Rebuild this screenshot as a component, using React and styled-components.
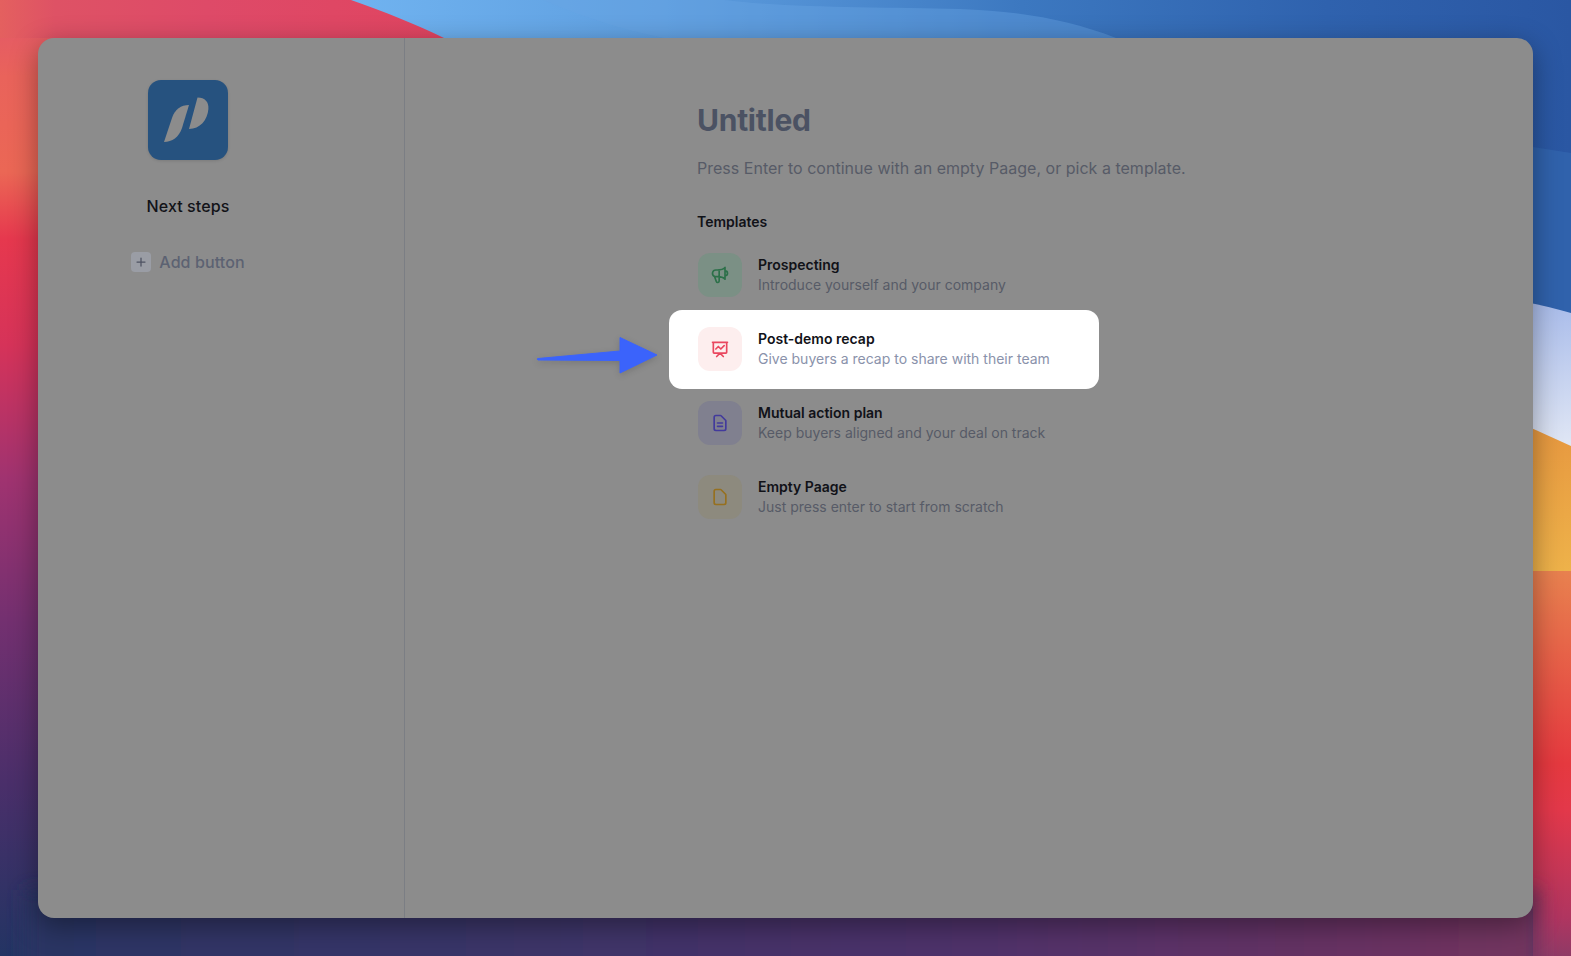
import styled, { createGlobalStyle } from 'styled-components';
import {
  HiOutlineSpeakerphone,
  HiOutlinePresentationChartLine,
  HiOutlineDocumentText,
  HiOutlineDocument,
  HiOutlinePlus,
} from 'react-icons/hi';

const templates = [
  { title: 'Prospecting', text: 'Introduce yourself and your company', Icon: HiOutlineSpeakerphone, tile: '#7b9085', ink: '#2c7049' },
  { title: 'Post-demo recap', text: 'Give buyers a recap to share with their team', Icon: HiOutlinePresentationChartLine, tile: '#fdeeee', ink: '#e9475f', active: true },
  { title: 'Mutual action plan', text: 'Keep buyers aligned and your deal on track', Icon: HiOutlineDocumentText, tile: '#80808f', ink: '#423a9c' },
  { title: 'Empty Paage', text: 'Just press enter to start from scratch', Icon: HiOutlineDocument, tile: '#8d8a7e', ink: '#96701f' },
];

function Wallpaper() {
  return (
    <WallpaperSvg viewBox="0 0 1571 956" preserveAspectRatio="none">
      <defs>
        <linearGradient id="left" x1="0" y1="0" x2="0" y2="1">
          <stop offset="0" stopColor="#e2566a" />
          <stop offset="0.08" stopColor="#e9635b" />
          <stop offset="0.18" stopColor="#eb6755" />
          <stop offset="0.25" stopColor="#e6384e" />
          <stop offset="0.36" stopColor="#d63359" />
          <stop offset="0.5" stopColor="#a03370" />
          <stop offset="0.65" stopColor="#733070" />
          <stop offset="0.82" stopColor="#4a2f6a" />
          <stop offset="1" stopColor="#233463" />
        </linearGradient>
        <linearGradient id="crest" x1="0" y1="0" x2="1" y2="0">
          <stop offset="0" stopColor="#e4605f" />
          <stop offset="0.12" stopColor="#de5265" />
          <stop offset="0.45" stopColor="#de4a68" />
          <stop offset="1" stopColor="#e04460" />
        </linearGradient>
        <linearGradient id="bottom" x1="0" y1="0" x2="1" y2="0">
          <stop offset="0" stopColor="#2a3464" />
          <stop offset="0.3" stopColor="#3a3568" />
          <stop offset="0.65" stopColor="#51306a" />
          <stop offset="1" stopColor="#74345f" />
        </linearGradient>
        <linearGradient id="sky" x1="0" y1="0" x2="1" y2="0">
          <stop offset="0" stopColor="#70b3f0" />
          <stop offset="0.25" stopColor="#5f9fe0" />
          <stop offset="0.55" stopColor="#3c78c0" />
          <stop offset="0.8" stopColor="#2f62ae" />
          <stop offset="1" stopColor="#2a57a3" />
        </linearGradient>
        <linearGradient id="pale" x1="0" y1="0" x2="0" y2="1">
          <stop offset="0" stopColor="#a8bbea" />
          <stop offset="1" stopColor="#e2e8f5" />
        </linearGradient>
        <linearGradient id="amber" x1="0" y1="0" x2="0" y2="1">
          <stop offset="0" stopColor="#e6963f" />
          <stop offset="1" stopColor="#eeb24a" />
        </linearGradient>
        <linearGradient id="ember" x1="0" y1="0" x2="0" y2="1">
          <stop offset="0" stopColor="#e8814f" />
          <stop offset="0.5" stopColor="#e5393f" />
          <stop offset="0.62" stopColor="#e3384a" />
          <stop offset="0.9" stopColor="#b03560" />
          <stop offset="1" stopColor="#8f3a66" />
        </linearGradient>
        <filter id="soft" x="-5%" y="-50%" width="110%" height="200%">
          <feGaussianBlur stdDeviation="9" />
        </filter>
      </defs>
      <rect width="1571" height="956" fill="url(#left)" />
      <rect width="460" height="38" fill="url(#crest)" />
      <path d="M351 0 C385 12 415 24 444 38 L444 320 L1571 320 L1571 0 Z" fill="url(#sky)" />
      <path d="M543 0 C585 18 625 30 664 38 L1116 38 C1070 20 1020 11 960 9 C880 7 790 8 724 0 Z" fill="#6aa5e4" opacity="0.4" />
      <path d="M1533 147 L1571 153 L1571 320 L1533 320 Z" fill="#3062ac" />
      <path d="M1500 298 C1525 301 1550 307 1571 313 L1571 450 L1500 450 Z" fill="url(#pale)" />
      <path d="M1500 415 C1525 425 1550 436 1571 446 L1571 571 L1500 571 Z" fill="url(#amber)" />
      <rect x="1533" y="571" width="38" height="385" fill="url(#ember)" />
      <rect x="25" y="890" width="1515" height="100" fill="url(#bottom)" filter="url(#soft)" />
    </WallpaperSvg>
  );
}

function App() {
  return (
    <Stage>
      <GlobalStyle />
      <Wallpaper />
      <Window>
        <Sidebar>
          <LogoTile>
            <svg width="80" height="80" viewBox="0 0 80 80">
              <path d="M16 62 L24 38 C27 29 33 25 41 25 L34 48 C31 57 24 62 16 62Z" fill="#8c8c8c" />
              <path d="M49.5 17.5 C57 17.5 61 22 60.4 29 C59.5 40 52 49 41 49 Z" fill="#8c8c8c" />
            </svg>
          </LogoTile>
          <SideTitle>Next steps</SideTitle>
          <AddButton>
            <PlusBox><HiOutlinePlus size={12} /></PlusBox>
            Add button
          </AddButton>
        </Sidebar>
        <Main>
          <Title>Untitled</Title>
          <Subtitle>Press Enter to continue with an empty Paage, or pick a template.</Subtitle>
          <SectionLabel>Templates</SectionLabel>
          <List>
            {templates.map(({ title, text, Icon, tile, ink, active }) => (
              <Row key={title} $active={active}>
                {active && (
                  <Arrow width="124" height="40" viewBox="0 0 124 40">
                    <path d="M2 22.5 L84 15 L84 1.5 L121 19 L84 37 L84 24.5 L2 24 Q0 23 2 22.5Z" fill="#3b63fb" stroke="#3b63fb" strokeLinejoin="round" strokeWidth="1" />
                  </Arrow>
                )}
                <Tile $bg={tile} $ink={ink}><Icon size={20} /></Tile>
                <div>
                  <RowTitle>{title}</RowTitle>
                  <RowText $active={active}>{text}</RowText>
                </div>
              </Row>
            ))}
          </List>
        </Main>
      </Window>
    </Stage>
  );
}

const GlobalStyle = createGlobalStyle`
  html, body {
    margin: 0;
    padding: 0;
    overflow: hidden;
  }
  body {
    font-family: Inter, "Liberation Sans", sans-serif;
  }
`;

const Stage = styled.div`
  position: relative;
  box-sizing: border-box;
  width: 1571px;
  height: 956px;
  padding: 38px;
  overflow: hidden;
`;

const WallpaperSvg = styled.svg`
  position: absolute;
  inset: 0;
  width: 100%;
  height: 100%;
`;

const Window = styled.div`
  position: relative;
  display: flex;
  height: 880px;
  background: #8c8c8c;
  border-radius: 16px;
  box-shadow: 0 8px 28px rgba(0, 0, 0, 0.38);
  overflow: hidden;
`;

const Sidebar = styled.aside`
  box-sizing: border-box;
  flex: 0 0 367px;
  display: flex;
  flex-direction: column;
  align-items: center;
  padding: 42px 66px 0 0;
  border-right: 1px solid #7b7e84;
`;

const LogoTile = styled.div`
  width: 80px;
  height: 80px;
  background: #26527f;
  border-radius: 13px;
  box-shadow: 0 1px 3px rgba(0, 0, 0, 0.12);

  svg {
    display: block;
  }
`;

const SideTitle = styled.div`
  margin-top: 34px;
  font-size: 16px;
  line-height: 24px;
  font-weight: 500;
  letter-spacing: 0.1px;
  color: #121318;
`;

const AddButton = styled.div`
  display: flex;
  align-items: center;
  gap: 8px;
  margin-top: 32px;
  font-size: 16px;
  line-height: 24px;
  font-weight: 500;
  letter-spacing: 0.1px;
  color: #5c6272;
`;

const PlusBox = styled.span`
  display: flex;
  align-items: center;
  justify-content: center;
  width: 20px;
  height: 20px;
  border-radius: 4px;
  background: #9a9da5;
  color: #4d5262;

  svg {
    stroke-width: 2.5;
  }
`;

const Main = styled.main`
  flex: 1;
  padding: 62px 0 0 292px;
`;

const Title = styled.h1`
  margin: 0;
  font-size: 30px;
  line-height: 40px;
  font-weight: 700;
  letter-spacing: -0.25px;
  color: #4b5263;
`;

const Subtitle = styled.p`
  margin: 16px 0 0;
  font-size: 16px;
  line-height: 24px;
  letter-spacing: 0.02px;
  color: #575b67;
`;

const SectionLabel = styled.div`
  margin-top: 32px;
  font-size: 14px;
  line-height: 20px;
  font-weight: 600;
  color: #111218;
`;

const List = styled.div`
  display: flex;
  flex-direction: column;
  align-items: flex-start;
  gap: 30px;
  margin-top: 21px;
`;

const Row = styled.div`
  position: relative;
  display: flex;
  align-items: center;
  gap: 16px;
  ${(p) => p.$active && `
    box-sizing: border-box;
    width: 430px;
    margin: -17px 0 -18px -28px;
    padding: 17px 28px 18px 28px;
    background: #fff;
    border-radius: 13px;
  `}
`;

const Arrow = styled.svg`
  position: absolute;
  left: -133px;
  top: 26px;
  filter: drop-shadow(0 2px 3px rgba(0, 0, 0, 0.15));
`;

const Tile = styled.div`
  display: flex;
  align-items: center;
  justify-content: center;
  flex: 0 0 44px;
  height: 44px;
  margin-left: 1px;
  border-radius: 12px;
  background: ${(p) => p.$bg};
  color: ${(p) => p.$ink};
`;

const RowTitle = styled.div`
  font-size: 14px;
  line-height: 20px;
  font-weight: 600;
  color: #111218;
`;

const RowText = styled.div`
  font-size: 14px;
  line-height: 20px;
  letter-spacing: 0;
  color: ${(p) => (p.$active ? '#8a92ab' : '#575b67')};
`;

export default App;
